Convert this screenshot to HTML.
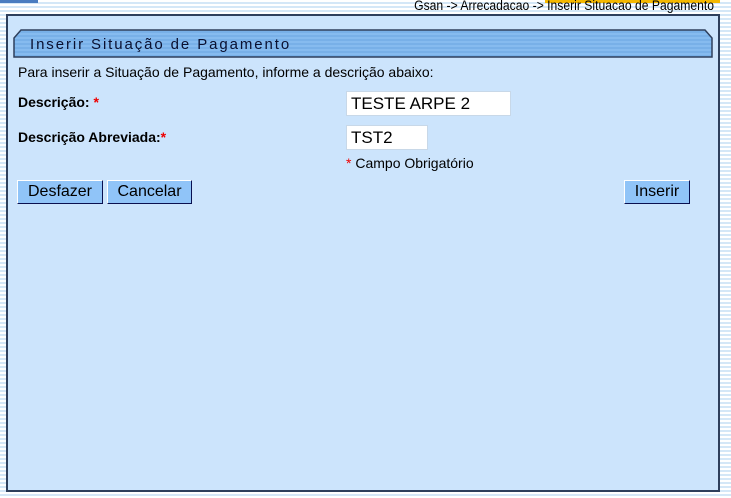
<!DOCTYPE html>
<html><head><meta charset="utf-8"><style>
body{margin:0;width:731px;height:498px;overflow:hidden;position:relative;font-family:"Liberation Sans",sans-serif;
background:repeating-linear-gradient(to bottom,#fff 0,#fff 2px,#d4e7f7 2px,#d4e7f7 4px);}
.abs{position:absolute}
#panel{left:6px;top:14px;width:710px;height:474px;border:2px solid #2e3f5c;background:#cce4fc}
#title{left:13px;top:29px;width:700px;height:29px}
.t{font-size:14px;color:#000;white-space:nowrap}
.in{background:#fff;border:1px solid #c8d8e8;font-size:17px;line-height:23px;padding-left:4px;box-sizing:border-box}
.btn{background:#90c4f8;border:1px solid;border-color:#fff #0a1050 #0a1050 #fff;box-sizing:border-box;font-size:16px;text-align:center;line-height:22px;height:24px}
</style></head><body>
<div class="abs" style="left:0;top:0;width:38px;height:3px;background:#4a7cc0"></div>
<div class="abs" style="left:545px;top:0;width:175px;height:3px;background:#f5b800"></div>
<div class="abs" style="left:300px;top:-2px;width:414px;text-align:right;font-size:13.5px;color:#000;white-space:nowrap;transform:scaleX(0.9);transform-origin:right">Gsan -&gt; Arrecadacao -&gt; Inserir Situacao de Pagamento</div>
<div id="panel" class="abs"></div>
<svg id="title" class="abs" width="700" height="29" viewBox="0 0 700 29">
<defs><pattern id="s" width="4" height="4" patternUnits="userSpaceOnUse"><rect width="4" height="4" fill="#86bbef"/><rect y="2" width="4" height="2" fill="#78b0e8"/></pattern></defs>
<path d="M1 28 V9 L8 1 H692 L699 9 V28 Z" fill="url(#s)" stroke="#2e3f5c" stroke-width="1.5"/>
<text x="17" y="20" font-family="Liberation Sans" font-size="15" letter-spacing="1.9" fill="#0a1030">Inserir Situação de Pagamento</text>
</svg>
<div class="abs t" style="left:18px;top:64px">Para inserir a Situação de Pagamento, informe a descrição abaixo:</div>
<div class="abs t" style="left:18px;top:94px;font-weight:bold">Descrição: <span style="color:#e00">*</span></div>
<div class="abs t" style="left:18px;top:129px;font-weight:bold">Descrição Abreviada:<span style="color:#e00">*</span></div>
<div class="abs in" style="left:346px;top:91px;width:165px;height:25px">TESTE ARPE 2</div>
<div class="abs in" style="left:346px;top:125px;width:82px;height:25px">TST2</div>
<div class="abs t" style="left:346px;top:155px"><span style="color:#e00">*</span> Campo Obrigatório</div>
<div class="abs btn" style="left:17px;top:180px;width:86px">Desfazer</div>
<div class="abs btn" style="left:107px;top:180px;width:85px">Cancelar</div>
<div class="abs btn" style="left:624px;top:180px;width:66px">Inserir</div>
</body></html>
